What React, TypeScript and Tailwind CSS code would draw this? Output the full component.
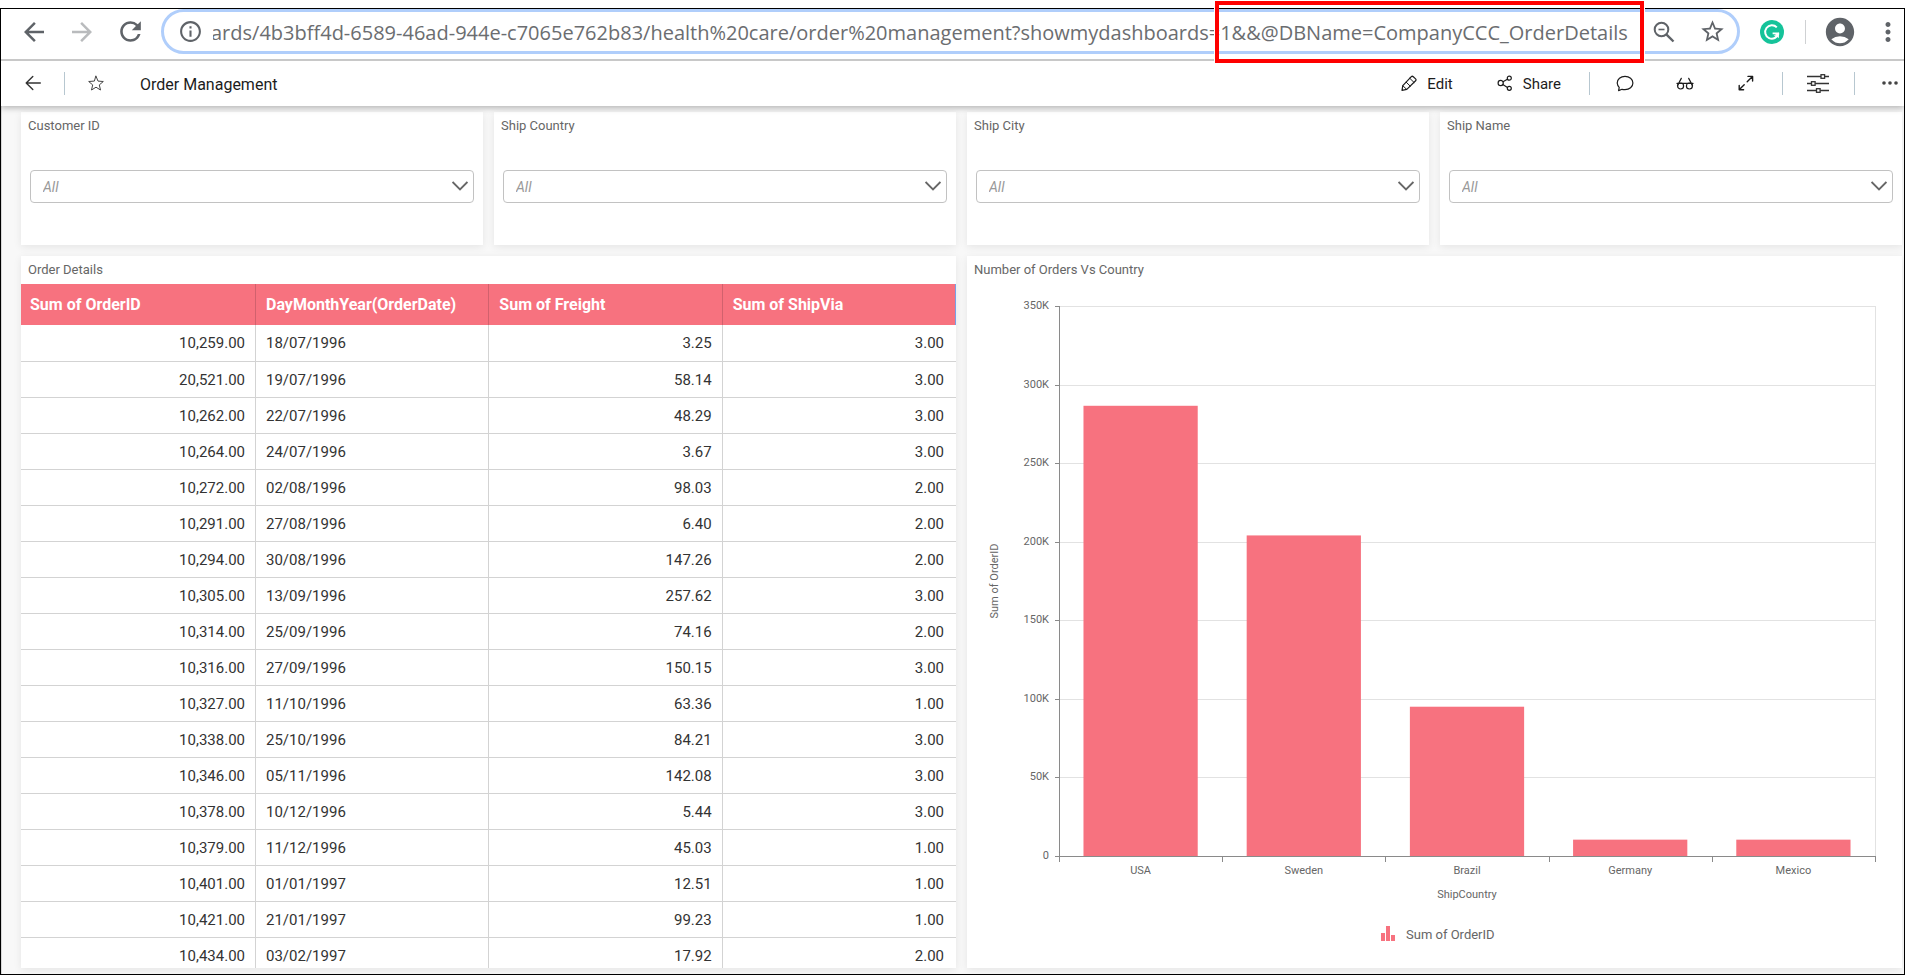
import type { ReactNode } from "react";
import {
  MdAccountCircle,
  MdArrowBack,
  MdArrowForward,
  MdInfoOutline,
  MdMoreVert,
  MdRefresh,
  MdStarBorder,
} from "react-icons/md";

const ADDRESS =
  "ards/4b3bff4d-6589-46ad-944e-c7065e762b83/health%20care/order%20management?showmydashboards=1&&@DBName=CompanyCCC_OrderDetails";

const FILTERS = ["Customer ID", "Ship Country", "Ship City", "Ship Name"];

const COLUMNS = ["Sum of OrderID", "DayMonthYear(OrderDate)", "Sum of Freight", "Sum of ShipVia"];

const ORDERS = [
  ["10,259.00", "18/07/1996", "3.25", "3.00"],
  ["20,521.00", "19/07/1996", "58.14", "3.00"],
  ["10,262.00", "22/07/1996", "48.29", "3.00"],
  ["10,264.00", "24/07/1996", "3.67", "3.00"],
  ["10,272.00", "02/08/1996", "98.03", "2.00"],
  ["10,291.00", "27/08/1996", "6.40", "2.00"],
  ["10,294.00", "30/08/1996", "147.26", "2.00"],
  ["10,305.00", "13/09/1996", "257.62", "3.00"],
  ["10,314.00", "25/09/1996", "74.16", "2.00"],
  ["10,316.00", "27/09/1996", "150.15", "3.00"],
  ["10,327.00", "11/10/1996", "63.36", "1.00"],
  ["10,338.00", "25/10/1996", "84.21", "3.00"],
  ["10,346.00", "05/11/1996", "142.08", "3.00"],
  ["10,378.00", "10/12/1996", "5.44", "3.00"],
  ["10,379.00", "11/12/1996", "45.03", "1.00"],
  ["10,401.00", "01/01/1997", "12.51", "1.00"],
  ["10,421.00", "21/01/1997", "99.23", "1.00"],
  ["10,434.00", "03/02/1997", "17.92", "2.00"],
];

const BARS = [
  { country: "USA", value: 286.5 },
  { country: "Sweden", value: 204 },
  { country: "Brazil", value: 95 },
  { country: "Germany", value: 10.4 },
  { country: "Mexico", value: 10.4 },
];

function ZoomOutIcon() {
  return (
    <svg viewBox="0 0 22 22" className="size-[22px]" fill="none" stroke="#5f6368" strokeWidth="2">
      <circle cx="8.5" cy="8.5" r="6.8" />
      <path d="M13.3 13.3 20.5 20.5" strokeWidth="2.4" />
      <path d="M5.5 8.5h6" strokeWidth="1.6" />
    </svg>
  );
}

function GrammarlyIcon() {
  return (
    <svg viewBox="0 0 24 24" className="size-6">
      <circle cx="12" cy="12" r="12" fill="#15c39a" />
      <path d="M16.8 7.4A6.7 6.7 0 1 0 18.4 13.6" fill="none" stroke="#fff" strokeWidth="2" />
      <path d="M12.6 13.4h5.6v1.2" fill="none" stroke="#fff" strokeWidth="1.8" />
      <path d="M18.9 12.6v5.6l-2.2-2.2-3.1-.4z" fill="#fff" />
    </svg>
  );
}

function LineIcon({ children, width = 16 }: { children: ReactNode; width?: number }) {
  return (
    <svg
      width={width}
      height="18"
      viewBox={`0 0 ${width} 18`}
      fill="none"
      stroke="currentColor"
      strokeWidth="1.2"
      strokeLinecap="round"
      strokeLinejoin="round"
    >
      {children}
    </svg>
  );
}

function BrowserBar() {
  return (
    <div className="relative z-20 flex h-[52px] shrink-0 items-start border-b-2 border-[#c8c8c8] bg-white">
      <div className="flex h-[45px] w-40 shrink-0 items-center gap-[18px] pl-[18px] text-[#5f6368]">
        <button aria-label="Back">
          <MdArrowBack size={30} />
        </button>
        <button aria-label="Forward" className="text-[#b9bbbd]">
          <MdArrowForward size={30} />
        </button>
        <button aria-label="Reload">
          <MdRefresh size={31} />
        </button>
      </div>
      <div className="relative flex h-[45px] min-w-0 flex-1 items-center rounded-full border-[3px] border-[#b0cefb] pl-[14px] text-[#5f6368]">
        <MdInfoOutline size={25} className="shrink-0" />
        <input
          aria-label="Address"
          defaultValue={ADDRESS}
          spellCheck={false}
          className="ml-[10px] min-w-0 flex-1 bg-transparent pt-[2px] font-['Open_Sans','Noto_Sans',sans-serif] text-[20px] text-[#6b6d70] outline-none indent-[-2px]"
        />
        <div className="flex shrink-0 items-center gap-[24px] pr-[11px] pl-[19px]">
          <button aria-label="Zoom">
            <ZoomOutIcon />
          </button>
          <button aria-label="Bookmark">
            <MdStarBorder size={27} />
          </button>
        </div>
        <div className="pointer-events-none absolute -top-[11px] right-[93px] h-[62px] w-[429px] border-4 border-[#fe0000] outline outline-white" />
      </div>
      <div className="flex h-[45px] shrink-0 items-center pr-px pl-[20px] text-[#5f6368]">
        <button aria-label="Grammarly">
          <GrammarlyIcon />
        </button>
        <span className="mr-[17px] ml-[21px] h-6 w-px bg-[#cfd1d3]" />
        <button aria-label="Profile">
          <MdAccountCircle size={34} />
        </button>
        <button aria-label="Browser menu" className="ml-[16px]">
          <MdMoreVert size={30} />
        </button>
      </div>
    </div>
  );
}

function Divider() {
  return <span className="h-[23px] w-px shrink-0 bg-[#b7c7d0]" />;
}

function DashboardBar() {
  return (
    <header className="relative z-10 flex h-[45px] shrink-0 items-center justify-between bg-white text-[#1c1c1c] shadow-[0_2px_6px_rgba(0,0,0,0.28)]">
      <div className="flex items-center">
        <button aria-label="Back to dashboards" className="ml-6">
          <LineIcon>
            <path d="M15.3 8H1.2M7.8 1.4 1.2 8l6.6 6.6" strokeWidth="1.4" stroke="#333" />
          </LineIcon>
        </button>
        <span className="ml-[23px] flex">
          <Divider />
        </span>
        <button aria-label="Add to favourites" className="ml-[23px]">
          <LineIcon>
            <path
              d="M8 1.2l2 4.9 5.3.4-4 3.4 1.2 5.1L8 12.2 3.5 15l1.2-5.1-4-3.4 5.3-.4z"
              stroke="#444"
              strokeWidth="1"
            />
          </LineIcon>
        </button>
        <h1 className="ml-9 pt-[2px] text-[16px]">Order Management</h1>
      </div>
      <div className="flex items-center text-[15px]">
        <button className="flex items-center gap-[10px]">
          <LineIcon>
            <path d="M1 15.3l.8-4.6L10.300 1.7q1-.9 2 0l2.300 2.200q.9.9 0 1.900L5.800 14.400z" />
            <path d="M8.800 3.300l4.200 4.100M1.900 10.800l3.800 3.600M5.200 7.200l4 3.900" strokeWidth="1" />
          </LineIcon>
          <span className="pt-px">Edit</span>
        </button>
        <button className="ml-[44px] flex items-center gap-[10px]">
          <LineIcon>
            <circle cx="3.7" cy="8" r="2.6" />
            <circle cx="12.3" cy="3.2" r="2" />
            <circle cx="12.3" cy="13.3" r="2" />
            <path d="M6 6.7l4.4-2.5M5.800 9.500l4.700 2.900" />
          </LineIcon>
          <span className="pt-px">Share</span>
        </button>
        <span className="ml-[28px] flex">
          <Divider />
        </span>
        <button aria-label="Comments" className="ml-[26px]">
          <LineIcon width={18}>
            <path d="M2.6 15.6l.6-3.2A7 7 0 0 1 1.2 8c0-3.900 3.400-6.600 7.800-6.600S16.900 4.100 16.900 8 13.400 14.700 9 14.700a10 10 0 0 1-3-.4z" />
          </LineIcon>
        </button>
        <button aria-label="View as reader" className="ml-[42px]">
          <LineIcon width={18}>
            <circle cx="4.6" cy="11" r="3" />
            <circle cx="13.4" cy="11" r="3" />
            <path d="M1.5 10.5 5.3 3.4M16.5 10.5l-3.8-7.100M1 8.400h16" />
          </LineIcon>
        </button>
        <button aria-label="Full screen" className="ml-[44px]">
          <LineIcon>
            <path d="M9.2 6.8l5.2-5.2M10 1.400h4.600V6M6.200 9.800 1.400 14.600M1.200 10.400v4.400h4.400" strokeWidth="1.4" />
          </LineIcon>
        </button>
        <span className="ml-[28px] flex">
          <Divider />
        </span>
        <button aria-label="Filters" className="ml-6">
          <svg width="22" height="22" viewBox="0 0 22 22" fill="#fff" stroke="#333" strokeWidth="1.3">
            <path d="M0 3.500h22M0 10.500h22M0 17.500h22" />
            <rect x="14" y="1.7" width="3.6" height="3.6" />
            <rect x="4.5" y="8.7" width="3.6" height="3.6" />
            <rect x="9.5" y="15.7" width="3.6" height="3.6" />
          </svg>
        </button>
        <span className="ml-[25px] flex">
          <Divider />
        </span>
        <button aria-label="More options" className="mr-[6px] ml-[27px]">
          <svg width="16" height="6" viewBox="0 0 16 6" fill="#444">
            <circle cx="2" cy="2" r="1.8" />
            <circle cx="8" cy="2" r="1.8" />
            <circle cx="14" cy="2" r="1.8" />
          </svg>
        </button>
      </div>
    </header>
  );
}

function Card({ children, className = "" }: { children: ReactNode; className?: string }) {
  return (
    <section className={`flex min-w-0 flex-col bg-white shadow-[0_2px_8px_rgba(0,0,0,0.08)] ${className}`}>
      {children}
    </section>
  );
}

function FilterCard({ label }: { label: string }) {
  const id = label.toLowerCase().replace(" ", "-");
  return (
    <Card className="pb-[42px]">
      <label htmlFor={id} className="block pl-[7px] text-[13px] leading-7 text-[#666]">
        {label}
      </label>
      <div className="relative mx-[9px] mt-[30px]">
        <select
          id={id}
          className="block h-[33px] w-full appearance-none rounded-[4px] border border-[#c2c2c2] bg-white pt-px pl-3 text-[14px] text-[#999] italic"
        >
          <option>All</option>
        </select>
        <svg
          viewBox="0 0 16 10"
          className="pointer-events-none absolute top-[11px] right-[6px] h-[10px] w-4"
          fill="none"
          stroke="#666"
          strokeWidth="1.8"
        >
          <path d="M.6 1 8 8.4 15.4 1" />
        </svg>
      </div>
    </Card>
  );
}

function OrdersTable() {
  return (
    <Card className="min-h-0 overflow-hidden">
      <h2 className="shrink-0 pl-[7px] text-[13px] leading-7 text-[#666]">Order Details</h2>
      <div className="min-h-0 flex-1 overflow-hidden">
        <table className="w-full table-fixed border-separate border-spacing-0 text-[15px] text-[#333]">
          <thead>
            <tr className="bg-[#f7727f]">
              {COLUMNS.map((name) => (
                <th
                  key={name}
                  scope="col"
                  className="h-[41px] border-r border-[#d1616d] pt-px pr-1 pl-[10px] text-left text-[16px] font-bold text-white first:w-[235px] first:pl-[9px] last:border-[#7a9fe6]"
                >
                  {name}
                </th>
              ))}
            </tr>
          </thead>
          <tbody>
            {ORDERS.map((row) => (
              <tr key={row[0]} className="group">
                {row.map((cell, i) => (
                  <td
                    key={i}
                    className={`border-r border-b border-[#d3d3d3] px-[10px] pt-px leading-[34px] group-first:pb-px last:border-r-0 last:pr-3 ${
                      i === 1 ? "text-left" : "text-right"
                    }`}
                  >
                    {cell}
                  </td>
                ))}
              </tr>
            ))}
          </tbody>
        </table>
      </div>
    </Card>
  );
}

const PLOT = { left: 92, right: 908, top: 22, bottom: 572 };

function OrdersChart() {
  const ticks = [0, 50, 100, 150, 200, 250, 300, 350];
  const y = (value: number) => PLOT.bottom - (value / 350) * (PLOT.bottom - PLOT.top);
  const step = (PLOT.right - PLOT.left) / BARS.length;
  const line = (value: number) => Math.round(y(value)) + 0.5;
  return (
    <Card className="min-h-0">
      <h2 className="shrink-0 pl-[7px] text-[13px] leading-7 text-[#666]">Number of Orders Vs Country</h2>
      <svg
        viewBox="0 0 935 684"
        className="min-h-0 w-full flex-1"
        role="img"
        aria-label="Number of Orders Vs Country"
        fill="#666"
        fontSize="11"
      >
        {ticks.map((t) => (
          <g key={t}>
            <path d={`M${PLOT.left} ${line(t)}H${PLOT.right}`} stroke="#e2e2e2" />
            <path d={`M${PLOT.left - 4} ${line(t)}h4`} stroke="#8a8a8a" />
            <text x="82" y={y(t) + 3} textAnchor="end">
              {t === 0 ? "0" : `${t}K`}
            </text>
          </g>
        ))}
        <path d={`M${PLOT.right + 0.5} ${PLOT.top}V${PLOT.bottom}`} stroke="#e2e2e2" />
        {BARS.map((bar, i) => (
          <g key={bar.country}>
            <rect
              x={PLOT.left + step * (i + 0.15)}
              y={y(bar.value)}
              width={step * 0.7}
              height={PLOT.bottom - y(bar.value)}
              fill="#f7727f"
            />
            <text x={PLOT.left + step * (i + 0.5)} y="590" textAnchor="middle">
              {bar.country}
            </text>
          </g>
        ))}
        <path
          d={`M${PLOT.left + 0.5} ${PLOT.top}V${PLOT.bottom + 0.5}H${PLOT.right + 1}`}
          fill="none"
          stroke="#8a8a8a"
        />
        {[0, 1, 2, 3, 4, 5].map((i) => (
          <path key={i} d={`M${Math.round(PLOT.left + step * i) + 0.5} ${PLOT.bottom}v6`} stroke="#8a8a8a" />
        ))}
        <text x="500" y="614" textAnchor="middle">
          ShipCountry
        </text>
        <text transform="translate(31 297) rotate(-90)" textAnchor="middle">
          Sum of OrderID
        </text>
        <path d="M414 649h4v8h-4zM419 642h4v15h-4zM424 651h4v6h-4z" fill="#f7727f" />
        <text x="439" y="655" fontSize="13">
          Sum of OrderID
        </text>
      </svg>
    </Card>
  );
}

export default function App() {
  return (
    <div className="flex h-screen flex-col bg-white pt-2 font-[Roboto,sans-serif]">
      <div className="flex min-h-0 flex-1 flex-col border border-black bg-[#f8f8f8]">
        <BrowserBar />
        <DashboardBar />
        <main className="grid min-h-0 flex-1 grid-cols-2 grid-rows-[auto_minmax(0,1fr)] gap-[11px] border-l border-[#d8d8d8] pt-[6px] pr-[2px] pb-[6px] pl-[19px]">
          <div className="col-span-2 grid grid-cols-4 gap-[11px]">
            {FILTERS.map((label) => (
              <FilterCard key={label} label={label} />
            ))}
          </div>
          <OrdersTable />
          <OrdersChart />
        </main>
      </div>
    </div>
  );
}
